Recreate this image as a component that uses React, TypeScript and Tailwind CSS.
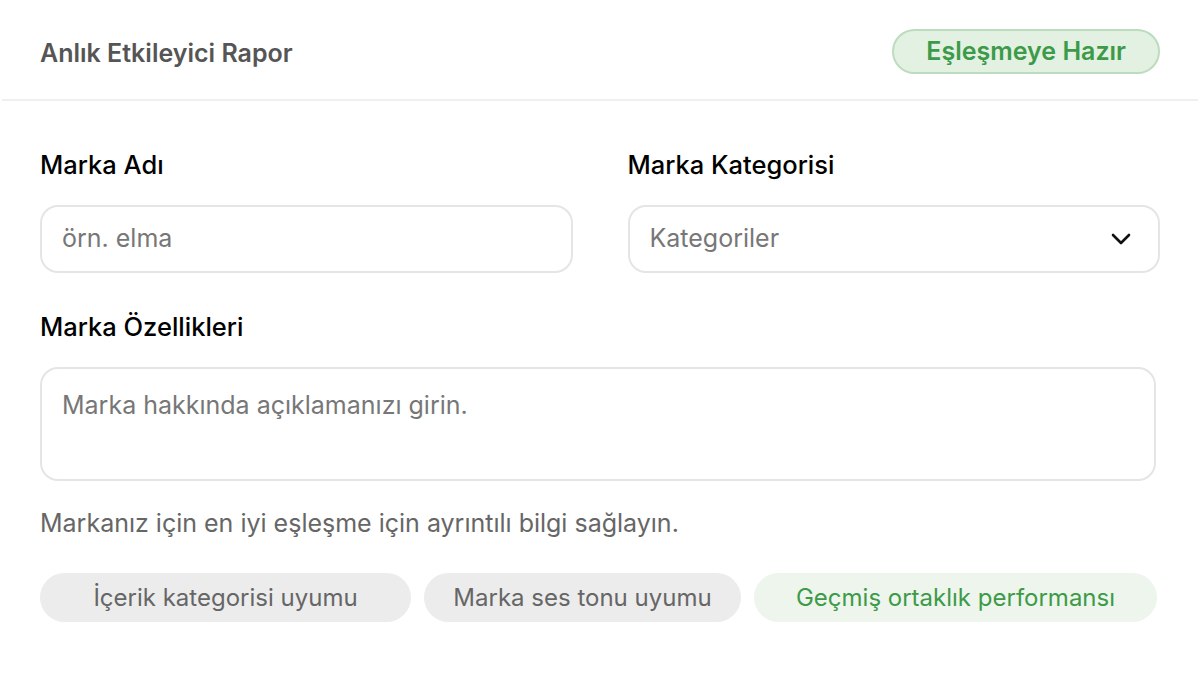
import React from "react";

export default function App() {
  const font = { fontFamily: 'Inter, "Liberation Sans", Arial, sans-serif' };
  return (
    <div className="w-[1200px] h-[673px] bg-white overflow-hidden" style={font}>
      <div className="mx-[2px] h-full rounded-[16px] bg-white">
        <div className="h-[101px] flex items-center justify-between pl-[38px] pr-[38px] border-b-2 border-[#efefef]">
          <div className="text-[25px] leading-[30px] font-semibold text-[#555555] mt-[6px]">Anlık Etkileyici Rapor</div>
          <div className="h-[45px] px-[32px] rounded-full bg-[#e3f1e3] border-2 border-[#bcdcbd] flex items-center text-[25px] font-semibold text-[#3d9a48] mt-[4px]">
            Eşleşmeye Hazır
          </div>
        </div>
        <div className="px-[38px]">
          <div className="grid grid-cols-2 gap-x-[55px] pt-[50px]">
            <div className="flex flex-col">
              <label className="text-[25.5px] leading-[28px] font-medium text-black">Marka Adı</label>
              <div className="mt-[26px] h-[68px] rounded-[18px] border-2 border-[#e5e5e5] flex items-center px-[20px] text-[25px] text-[#777777]">
                örn. elma
              </div>
            </div>
            <div className="flex flex-col">
              <label className="text-[25.5px] leading-[28px] font-medium text-black">Marka Kategorisi</label>
              <div className="mt-[26px] h-[68px] rounded-[18px] border-2 border-[#e5e5e5] flex items-center justify-between pl-[20px] pr-[26px] text-[25px] text-[#777777]">
                <span>Kategoriler</span>
                <svg width="22" height="14" viewBox="0 0 22 14" fill="none">
                  <path d="M3 3l8 8 8-8" stroke="#111" strokeWidth="2.6" strokeLinecap="round" strokeLinejoin="round" />
                </svg>
              </div>
            </div>
          </div>
          <label className="block mt-[40px] text-[25.5px] leading-[28px] font-medium text-black">Marka Özellikleri</label>
          <div className="mt-[26px] w-[1116px] h-[114px] rounded-[18px] border-2 border-[#e5e5e5] px-[20px] pt-[22px] text-[25px] leading-[28px] text-[#777777]">
            Marka hakkında açıklamanızı girin.
          </div>
          <div className="mt-[28px] text-[25px] leading-[28px] text-[#666666]">
            Markanız için en iyi eşleşme için ayrıntılı bilgi sağlayın.
          </div>
          <div className="mt-[36px] flex gap-[13px]">
            <div className="h-[49px] w-[371px] rounded-full bg-[#ececec] flex items-center justify-center text-[24px] text-[#666666]">İçerik kategorisi uyumu</div>
            <div className="h-[49px] w-[317px] rounded-full bg-[#ececec] flex items-center justify-center text-[24px] text-[#666666]">Marka ses tonu uyumu</div>
            <div className="h-[49px] w-[403px] rounded-full bg-[#edf5ed] flex items-center justify-center text-[24px] text-[#3d9a48]">Geçmiş ortaklık performansı</div>
          </div>
        </div>
      </div>
    </div>
  );
}
